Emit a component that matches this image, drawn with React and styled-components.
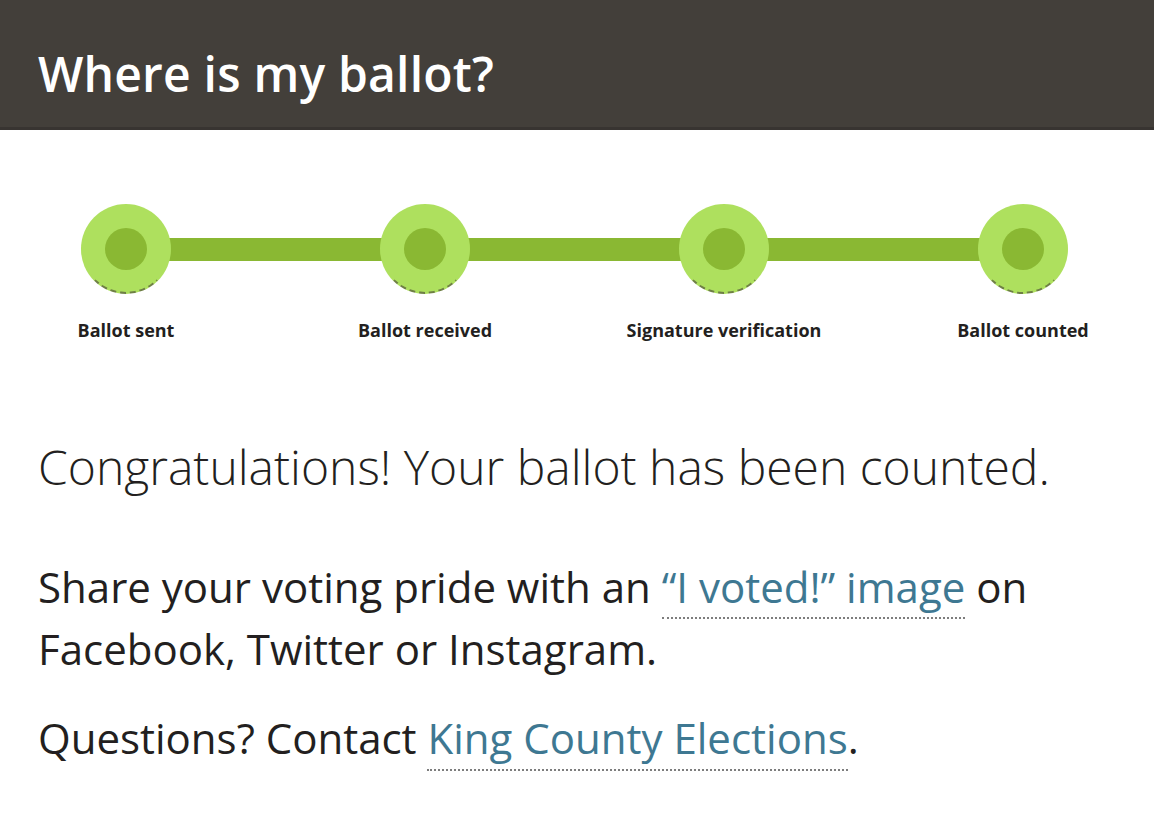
import React from 'react'
import styled, { createGlobalStyle } from 'styled-components';

const GlobalStyle = createGlobalStyle`
  body {
    margin: 0;
    background: #ffffff;
    font-family: "Open Sans", "Liberation Sans", sans-serif;
    color: #231f20;
  }
`;

const Header = styled.header`
  background: #433f3a;
  height: 130px;
  box-sizing: border-box;
  border-bottom: 3px solid #383431;
  display: flex;
  align-items: center;
  padding: 20px 38px 0;
`;
const Title = styled.h1`
  margin: 0;
  color: #ffffff;
  font-size: 48px;
  font-weight: 600;
  letter-spacing: 0.2px;
`;
const Stepper = styled.div`
  margin: 74px 0 0 81px;
  width: 987px;
`;
const Track = styled.div`
  position: relative;
  display: flex;
  justify-content: space-between;
  &::before {
    content: "";
    position: absolute;
    left: 45px;
    right: 45px;
    top: 34px;
    height: 23px;
    background: #8ab833;
  }
`;
const Step = styled.div`
  position: relative;
  width: 90px;
  display: flex;
  flex-direction: column;
  align-items: center;
`;
const Circle = styled.div`
  width: 90px;
  height: 90px;
  box-sizing: border-box;
  border-radius: 50%;
  background: #aee05e;
  border: 2px dashed transparent;
  border-bottom-color: #6e7f45;
  display: flex;
  align-items: center;
  justify-content: center;
`;
const Dot = styled.div`
  width: 42px;
  height: 42px;
  border-radius: 50%;
  background: ${(props) => (props.done ? "#8ab833" : "#ffffff")};
`;
const Label = styled.div`
  margin-top: 24px;
  font-size: 18px;
  font-weight: 700;
  white-space: nowrap;
  color: #231f20;
`;
const Content = styled.div`
  padding: 0 38px;
`;
const Headline = styled.p`
  margin: 95px 0 0;
  font-size: 48px;
  font-weight: 300;
  line-height: 60px;
  color: #231f20;
`;
const Text = styled.p`
  margin: ${(props) => props.top}px 0 0;
  font-size: 42px;
  font-weight: 400;
  line-height: 59px;
  color: #231f20;
`;
const Link = styled.a`
  display: inline-block;
  line-height: 1.15;
  color: #3e7892;
  text-decoration: none;
  border-bottom: 2px dotted #7d7d7d;
  padding-bottom: 6px;
`;

const steps = ["Ballot sent", "Ballot received", "Signature verification", "Ballot counted"]

const App = () => {
    return (
        <>
            <GlobalStyle />
            <Header>
                <Title>Where is my ballot?</Title>
            </Header>
            <Stepper>
                <Track>
                    {steps.map((s) => (
                        <Step key={s}>
                            <Circle><Dot done /></Circle>
                            <Label>{s}</Label>
                        </Step>
                    ))}
                </Track>
            </Stepper>
            <Content>
                <Headline>Congratulations! Your ballot has been counted.</Headline>
                <Text top={60}>
                    Share your voting pride with an <Link href="#">“I voted!” image</Link> on Facebook, Twitter or Instagram.
                </Text>
                <Text top={30}>
                    Questions? Contact <Link href="#">King County Elections</Link>.
                </Text>
            </Content>
        </>
    )
}

export default App
